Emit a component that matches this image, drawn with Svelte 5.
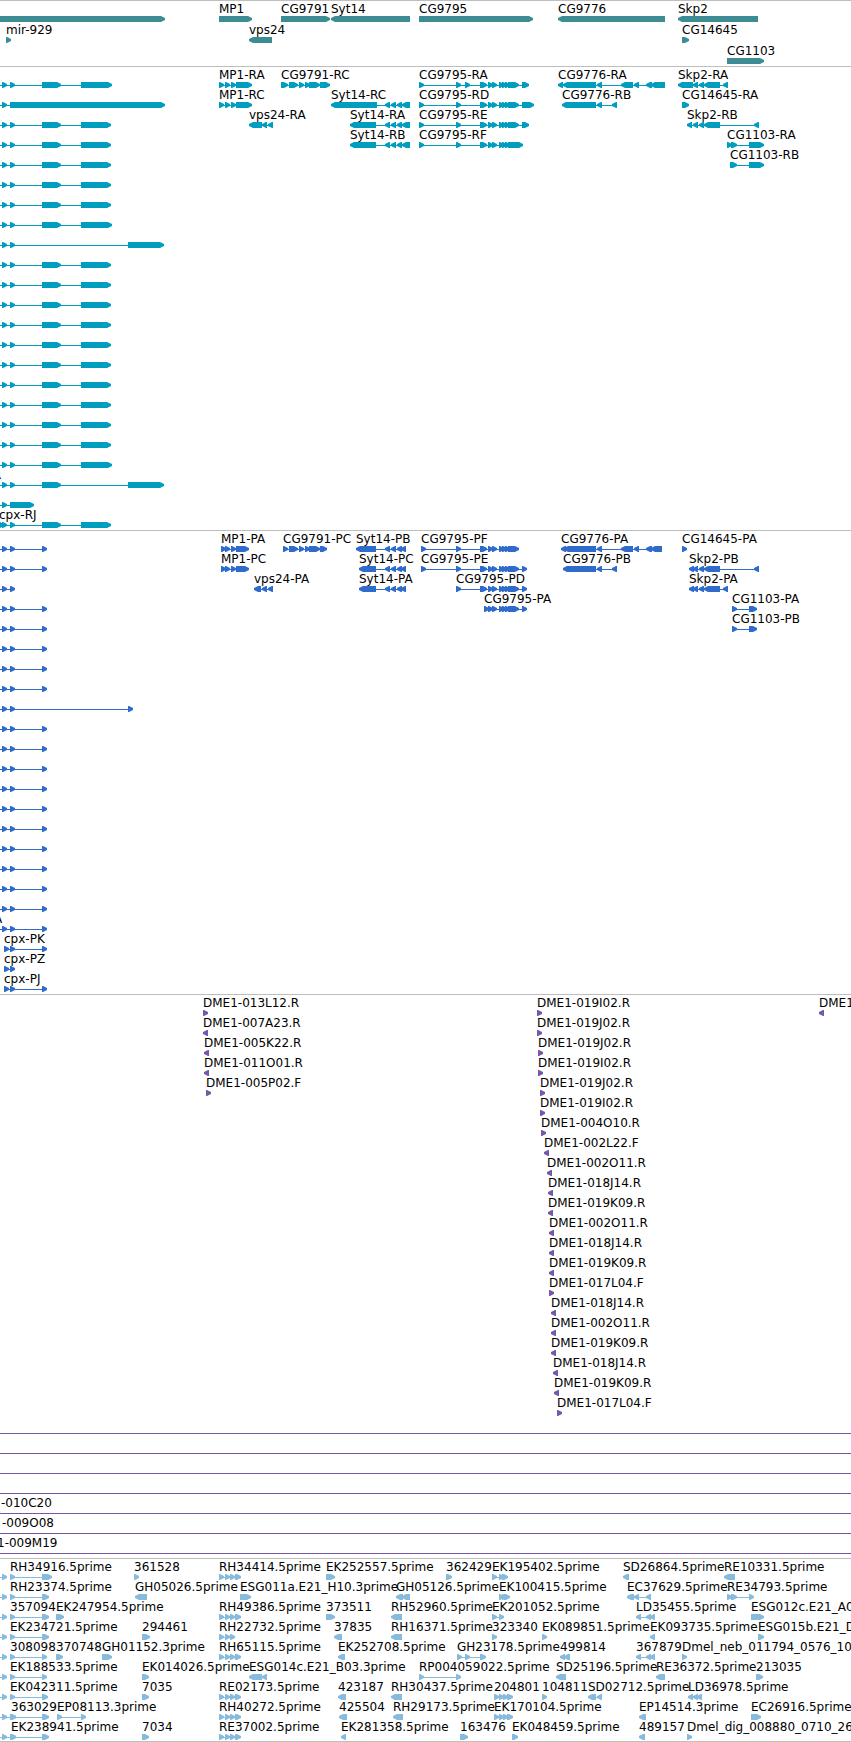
<script lang="ts">
  type Block = [number, number];
  type Feature = {
    label: string;
    strand: number;
    blocks: Block[];
    labelX: number;
  };
  type Track = { name: string; rows: Feature[][] };

  const HEAD = 4;

  function fwd(label: string, ...blocks: Block[]): Feature {
    return { label, strand: 1, blocks, labelX: blocks[0][0] };
  }

  function rev(label: string, ...blocks: Block[]): Feature {
    return { label, strand: -1, blocks, labelX: blocks[0][0] };
  }

  // A feature that runs past both edges of the view
  function through(label = '', labelX = 0): Feature {
    return { label, strand: 0, blocks: [], labelX };
  }

  // Block with a blunt arrow head on its downstream side
  function shape(strand: number, [a, b]: Block): string {
    if (strand > 0) {
      const neck = Math.max(a, b - HEAD);
      return `${a},0 ${neck},0 ${b},2 ${b},4 ${neck},6 ${a},6`;
    }
    const neck = Math.min(b, a + HEAD);
    return `${b},0 ${neck},0 ${a},2 ${a},4 ${neck},6 ${b},6`;
  }

  // cpx isoforms share their upstream exons, which start left of the view
  const cpx = (...tail: Block[]) => fwd('', [-20, -12], [2, 7], ...tail);
  const e2: Block = [10, 15];
  const cpxR = (end = 111) => cpx(e2, [42, 61], [81, end]);
  const cpxP = () => cpx(e2, [42, 47]);
  const repeat = (n: number, make: () => Feature) => Array.from({ length: n }, () => [make()]);

  const mp1: Block[] = [[225, 230], [231, 236]];
  const sytR: Block[] = [[385, 390], [391, 396], [397, 402], [402, 410]];
  const sytP: Block[] = [[385, 390], [391, 396], [397, 402], [401, 406]];
  const cg9795: Block[] = [[488, 493], [492, 497], [499, 504], [502, 507], [505, 510]];
  const cg9795b: Block[] = [[480, 487], ...cg9795];
  const cg9791: Block[] = [[289, 298], [299, 304], [305, 310], [309, 320]];
  const cg9776: Block[] = [[597, 602], [621, 633], [634, 639], [646, 652]];
  const skp2: Block[] = [[693, 698], [699, 704], [704, 720]];

  const genes: Feature[][] = [
    [
      fwd('', [-20, 165]),
      fwd('MP1', [219, 252]),
      fwd('CG9791', [281, 330]),
      rev('Syt14', [331, 410]),
      fwd('CG9795', [419, 533]),
      rev('CG9776', [558, 665]),
      rev('Skp2', [678, 758]),
    ],
    [fwd('mir-929', [6, 11]), rev('vps24', [249, 272]), fwd('CG14645', [682, 689])],
    [fwd('CG1103', [727, 764])],
  ];

  const transcripts: Feature[][] = [
    [
      cpxR(112),
      fwd('MP1-RA', [219, 224], ...mp1, [236, 252]),
      fwd('CG9791-RC', [281, 288], ...cg9791, [320, 330]),
      fwd('CG9795-RA', [419, 424], [456, 461], [465, 470], ...cg9795b, [508, 519], [522, 529]),
      rev('CG9776-RA', [558, 563], [563, 596], ...cg9776, [651, 665]),
      rev('Skp2-RA', [678, 693], [693, 698], [699, 704], [704, 720], [723, 728]),
    ],
    [
      cpx([10, 165]),
      fwd('MP1-RC', [219, 224], ...mp1, [236, 252]),
      rev('Syt14-RC', [331, 377], ...sytR),
      fwd('CG9795-RD', [419, 424], [456, 461], ...cg9795b, [508, 519], [522, 534]),
      rev('CG9776-RB', [562, 596], [597, 602], [612, 617]),
      fwd('CG14645-RA', [682, 689]),
    ],
    [
      cpxR(),
      rev('vps24-RA', [249, 262], [262, 267], [268, 273]),
      rev('Syt14-RA', [350, 376], ...sytR),
      fwd('CG9795-RE', [419, 424], [456, 461], ...cg9795b, [508, 519], [522, 529]),
      rev('Skp2-RB', [687, 692], ...skp2, [754, 759]),
    ],
    [
      cpxR(),
      rev('Syt14-RB', [350, 376], ...sytR),
      fwd('CG9795-RF', [419, 424], [456, 461], ...cg9795b, [508, 523]),
      fwd('CG1103-RA', [727, 732], [731, 737], [749, 764]),
    ],
    [cpxR(), fwd('CG1103-RB', [730, 737], [749, 764])],
    ...repeat(2, () => cpxR()),
    [cpxR(112)],
    [cpx(e2, [128, 164])],
    ...repeat(10, () => cpxR()),
    [cpxR(112)],
    [cpx(e2, [42, 61], [128, 164]), { label: 'R', strand: 1, blocks: [], labelX: -7 }],
    [cpx([10, 34])],
    [fwd('cpx-RJ', [-1, 4], [2, 7], e2, [42, 61], [81, 111])],
  ];

  const proteins: Feature[][] = [
    [
      cpxP(),
      fwd('MP1-PA', [221, 226], ...mp1, [236, 249]),
      fwd('CG9791-PC', [283, 288], ...cg9791, [320, 327]),
      rev('Syt14-PB', [356, 376], ...sytP),
      fwd('CG9795-PF', [421, 426], [456, 461], ...cg9795b, [508, 519]),
      rev('CG9776-PA', [561, 566], [564, 596], ...cg9776, [651, 662]),
      fwd('CG14645-PA', [682, 687]),
    ],
    [
      cpxP(),
      fwd('MP1-PC', [221, 226], ...mp1, [236, 249]),
      rev('Syt14-PC', [359, 376], ...sytP),
      fwd('CG9795-PE', [421, 426], [456, 461], ...cg9795b, [508, 519], [522, 527]),
      rev('CG9776-PB', [563, 596], [597, 602], [612, 617]),
      rev('Skp2-PB', [689, 694], ...skp2, [754, 759]),
    ],
    [
      cpx(e2),
      rev('vps24-PA', [254, 261], [262, 267], [268, 273]),
      rev('Syt14-PA', [359, 376], ...sytP),
      fwd('CG9795-PD', [456, 461], ...cg9795b, [508, 519], [522, 527]),
      rev('Skp2-PA', [689, 694], ...skp2, [723, 728]),
    ],
    [
      cpxP(),
      fwd('CG9795-PA', [484, 489], ...cg9795, [508, 519], [522, 527]),
      fwd('CG1103-PA', [732, 737], [749, 757]),
    ],
    [cpxP(), fwd('CG1103-PB', [732, 737], [749, 757])],
    ...repeat(3, cpxP),
    [cpx(e2, [128, 133])],
    ...repeat(10, cpxP),
    [cpxP(), { label: 'A', strand: 1, blocks: [], labelX: -6 }],
    [fwd('cpx-PK', [4, 9], e2, [42, 47])],
    [fwd('cpx-PZ', [4, 9], e2)],
    [fwd('cpx-PJ', [4, 9], e2, [42, 47])],
  ];

  // BAC ends are all one arrow head wide
  const endF = (label: string, x: number) => fwd(label, [x, x + 5]);
  const endR = (label: string, x: number) => rev(label, [x, x + 5]);

  const bacs: Feature[][] = [
    [endF('DME1-013L12.R', 203), endF('DME1-019I02.R', 537), endR('DME1', 819)],
    [endR('DME1-007A23.R', 203), endF('DME1-019J02.R', 537)],
    [endR('DME1-005K22.R', 204), endF('DME1-019J02.R', 538)],
    [endR('DME1-011O01.R', 204), endF('DME1-019I02.R', 538)],
    [endF('DME1-005P02.F', 206), endF('DME1-019J02.R', 540)],
    [endF('DME1-019I02.R', 540)],
    [endF('DME1-004O10.R', 541)],
    [endR('DME1-002L22.F', 544)],
    [endR('DME1-002O11.R', 547)],
    [endR('DME1-018J14.R', 548)],
    [endR('DME1-019K09.R', 548)],
    [endR('DME1-002O11.R', 549)],
    [endR('DME1-018J14.R', 549)],
    [endR('DME1-019K09.R', 549)],
    [endF('DME1-017L04.F', 549)],
    [endR('DME1-018J14.R', 551)],
    [endR('DME1-002O11.R', 551)],
    [endR('DME1-019K09.R', 551)],
    [endR('DME1-018J14.R', 553)],
    [endR('DME1-019K09.R', 554)],
    [endF('DME1-017L04.F', 557)],
    ...repeat(4, () => through()),
    [through('-010C20', 1)],
    [through('-009O08', 2)],
    [through('1-009M19', -3)],
  ];

  const rh: Block[] = [[219, 224], [225, 230], [230, 235], [235, 241]];
  const ek: Block[] = [[494, 499], [499, 504], [503, 508], [507, 513]];
  const ld: Block[] = [[636, 641], [646, 651], [650, 655]];

  const ests: Feature[][] = [
    [
      cpx(),
      fwd('RH34916.5prime', e2, [42, 52]),
      fwd('361528', [134, 139]),
      fwd('RH34414.5prime', ...rh),
      fwd('EK252557.5prime', [326, 335]),
      fwd('362429', [446, 452]),
      fwd('EK195402.5prime', [492, 497], [499, 504], [502, 508]),
      rev('SD26864.5prime', [623, 629]),
      rev('RE10331.5prime', [724, 735]),
    ],
    [
      cpx(),
      fwd('RH23374.5prime', e2, [42, 49]),
      rev('GH05026.5prime', [135, 147]),
      fwd('ESG011a.E21_H10.3prime', [240, 251]),
      rev('GH05126.5prime', [396, 403], [402, 410]),
      fwd('EK100415.5prime', [499, 504], [502, 507], [504, 510]),
      rev('EC37629.5prime', [627, 634], [634, 639], [646, 651]),
      fwd('RE34793.5prime', [727, 732], [731, 737], [749, 754]),
    ],
    [
      cpx(),
      fwd('357094', e2, [42, 49]),
      fwd('EK247954.5prime', [56, 64]),
      fwd('RH49386.5prime', ...rh),
      fwd('373511', [326, 335]),
      rev('RH52960.5prime', [391, 402]),
      fwd('EK201052.5prime', [492, 497], [499, 504]),
      rev('LD35455.5prime', ...ld),
      fwd('ESG012c.E21_A0', [751, 764]),
    ],
    [
      cpx(),
      fwd('EK234721.5prime', e2, [42, 49]),
      fwd('294461', [142, 150]),
      fwd('RH22732.5prime', ...rh.slice(0, 3)),
      rev('37835', [334, 342]),
      rev('RH16371.5prime', [391, 402]),
      fwd('323340', [492, 497]),
      fwd('EK089851.5prime', [542, 547]),
      rev('EK093735.5prime', [650, 655]),
      fwd('ESG015b.E21_D', [758, 764]),
    ],
    [
      cpx(),
      fwd('308098', e2, [42, 47]),
      fwd('370748', [56, 63]),
      fwd('GH01152.3prime', [102, 112]),
      fwd('RH65115.5prime', ...rh),
      rev('EK252708.5prime', [338, 345]),
      fwd('GH23178.5prime', [457, 462], [465, 470], [480, 486]),
      rev('499814', [560, 565], [564, 570]),
      rev('367879', ...ld),
      fwd('Dmel_neb_011794_0576_10', [682, 687]),
    ],
    [
      cpx(),
      fwd('EK188533.5prime', e2, [42, 47]),
      fwd('EK014026.5prime', [142, 149]),
      rev('ESG014c.E21_B03.3prime', [249, 262], [262, 267]),
      fwd('RP004059022.5prime', [419, 424], [456, 461]),
      rev('SD25196.5prime', [556, 566]),
      rev('RE36372.5prime', [656, 665]),
      fwd('213035', [756, 763]),
    ],
    [
      cpx(),
      fwd('EK042311.5prime', e2, [42, 48]),
      fwd('7035', [142, 149]),
      fwd('RE02173.5prime', ...rh),
      rev('423187', [338, 346]),
      rev('RH30437.5prime', [391, 402]),
      fwd('204801', ...ek),
      fwd('104811', [542, 547]),
      rev('SD02712.5prime', [588, 596], [597, 602]),
      rev('LD36978.5prime', [688, 693], [693, 698], [697, 702]),
    ],
    [
      cpx([10, 16]),
      fwd('363029', [11, 16], [42, 49]),
      fwd('EP08113.3prime', [57, 62], [81, 86]),
      fwd('RH40272.5prime', ...rh),
      rev('425504', [339, 347]),
      rev('RH29173.5prime', [393, 403]),
      fwd('EK170104.5prime', ...ek),
      rev('EP14514.3prime', [639, 646]),
      fwd('EC26916.5prime', [751, 761]),
    ],
    [
      cpx([10, 16]),
      fwd('EK238941.5prime', [11, 16], [42, 49]),
      fwd('7034', [142, 149]),
      fwd('RE37002.5prime', ...rh),
      rev('EK281358.5prime', [341, 346]),
      fwd('163476', [460, 468]),
      fwd('EK048459.5prime', [512, 518]),
      rev('489157', [639, 645]),
      fwd('Dmel_dig_008880_0710_26', [687, 692]),
    ],
  ];

  const tracks: Track[] = [
    { name: 'gene', rows: genes },
    { name: 'transcript', rows: transcripts },
    { name: 'protein', rows: proteins },
    { name: 'bac', rows: bacs },
    { name: 'est', rows: ests },
  ];
</script>

<main class="browser">
  {#each tracks as track}
    <section class="track {track.name}">
      {#each track.rows as row}
        <div class="row">
          <div class="labels">
            {#each row as feature}
              {#if feature.label}
                <span class="label" style="left: {feature.labelX}px">{feature.label}</span>
              {/if}
            {/each}
          </div>
          <svg class="glyphs" aria-hidden="true">
            {#each row as feature}
              {#if feature.strand === 0}
                <rect x="0" y="3" width="100%" height="1" />
              {:else if feature.blocks.length}
                {@const start = feature.blocks[0][0]}
                {@const end = feature.blocks[feature.blocks.length - 1][1]}
                <rect x={start} y="3" width={end - start} height="1" />
                {#each feature.blocks as block}
                  <polygon points={shape(feature.strand, block)} />
                {/each}
              {/if}
            {/each}
          </svg>
        </div>
      {/each}
    </section>
  {/each}
</main>

<style>
  :global(body) {
    margin: 0;
    background: #fff;
  }

  .browser {
    overflow: hidden;
    border-bottom: 1px solid #bebebe;
    color: #000;
    font-family: 'DejaVu Sans', Verdana, sans-serif;
    font-size: 12px;
    line-height: 14px;
  }

  .track {
    display: flex;
    flex-direction: column;
    padding: 1px 0 2px;
    border-top: 1px solid #bebebe;
  }

  .track:last-child {
    padding-bottom: 1px;
  }

  .row {
    display: grid;
    grid-template-rows: 14px 6px;
  }

  .labels {
    position: relative;
  }

  /* labels sit at their feature's coordinate and may run into each other */
  .label {
    position: absolute;
    top: 0;
    white-space: nowrap;
  }

  .glyphs {
    display: block;
    width: 100%;
    height: 6px;
  }

  .gene {
    gap: 1px;
    fill: #3d8c93;
  }

  .transcript {
    fill: #009dbf;
  }

  .protein {
    fill: #2f6bcb;
  }

  .bac {
    fill: #7558a8;
  }

  .est {
    fill: #87bbdd;
  }
</style>
